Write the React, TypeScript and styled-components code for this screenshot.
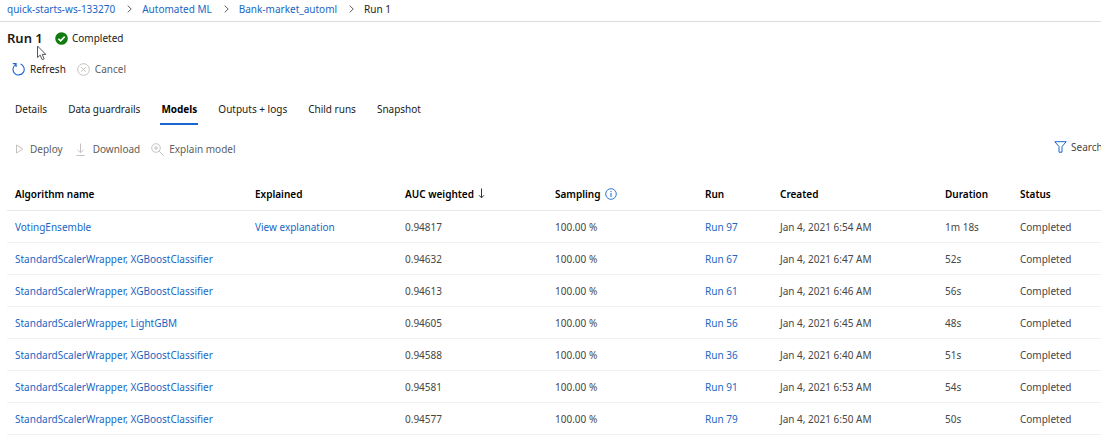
import React from "react";
import styled, { createGlobalStyle, css } from "styled-components";

const GlobalStyle = createGlobalStyle`
  *, *::before, *::after { box-sizing: border-box; }
  body {
    margin: 0;
    background: #ffffff;
    color: #1b1a19;
    font-family: "Noto Sans", "Open Sans", sans-serif;
    font-size: 10px;
    line-height: 16px;
    overflow-x: hidden;
  }
`;

const colors = {
  link: "#1a66c4",
  text: "#1b1a19",
  cell: "#484644",
  muted: "#605e5c",
  faint: "#c4c2c0",
  line: "#f1f1f1",
};

const Breadcrumbs = styled.nav`
  height: 22px;
  border-bottom: 1px solid #dcdcdc;
  padding: 1px 7px 0;

  ol {
    display: flex;
    margin: 0;
    padding: 0;
    list-style: none;
  }
  li {
    display: flex;
    align-items: center;
    white-space: nowrap;
  }
`;

const Link = styled.a`
  color: ${colors.link};
  text-decoration: none;
  &:hover { text-decoration: underline; }
`;

const Chevron = styled.svg`
  width: 5px;
  height: 8px;
  margin: 0 10px 0 12px;
`;

const Header = styled.header`
  position: relative;
  display: flex;
  align-items: center;
  height: 32px;
  padding-left: 7px;
`;

const Title = styled.h1`
  margin: 0;
  width: 48px;
  font-size: 13px;
  font-weight: 600;
  white-space: nowrap;
`;

const Status = styled.span`
  display: flex;
  align-items: center;
  gap: 4px;
`;

const Pointer = styled.svg`
  position: absolute;
  left: 36px;
  top: 23px;
  width: 12px;
  height: 17px;
`;

const Toolbar = styled.div<{ $top: number; $left: number }>`
  display: flex;
  align-items: center;
  margin-top: ${(p) => p.$top}px;
  padding-left: ${(p) => p.$left}px;
  height: 24px;
`;

const Command = styled.button<{ $gap?: number; $after?: number }>`
  display: flex;
  align-items: center;
  gap: ${(p) => p.$gap ?? 5}px;
  margin: 0 ${(p) => p.$after ?? 11}px 0 0;
  padding: 0;
  border: 0;
  background: none;
  color: ${colors.text};
  font: inherit;
  white-space: nowrap;
  &:disabled { color: ${colors.muted}; }
`;

const Tabs = styled.div`
  display: flex;
  gap: 19px;
  margin-top: 12px;
  padding-left: 14px;
`;

const Tab = styled.button<{ $active?: boolean }>`
  height: 32px;
  padding: 2px 1px 0;
  border: 0;
  border-bottom: 2px solid transparent;
  background: none;
  color: ${colors.text};
  font: inherit;
  white-space: nowrap;
  ${(p) => p.$active && css`
    border-bottom-color: #1a66d0;
    color: #000000;
    font-weight: 700;
  `}
`;

const Search = styled.label`
  display: flex;
  align-items: center;
  align-self: flex-start;
  gap: 4px;
  margin-left: auto;
  padding-top: 2px;
`;

const SearchInput = styled.input`
  width: 30px;
  padding: 0;
  border: 0;
  outline: 0;
  background: none;
  font: inherit;
  color: ${colors.cell};
  &::placeholder { color: ${colors.cell}; opacity: 1; }
`;

const Grid = styled.main`
  margin-top: 16px;
  padding-left: 7px;
`;

const Table = styled.table`
  width: 100%;
  table-layout: fixed;
  border-collapse: separate;
  border-spacing: 0;

  th, td {
    height: 32px;
    padding: 0 0 0 8px;
    border-bottom: 1px solid ${colors.line};
    text-align: left;
    white-space: nowrap;
  }
  th {
    height: 34px;
    border-bottom-color: #e6e8ea;
    color: #000000;
    font-weight: 600;
  }
  td { color: ${colors.cell}; }
`;

const HeadLabel = styled.span`
  display: flex;
  align-items: center;
  gap: 4px;
`;

const columnWidths = [240, 150, 150, 150, 75, 165, 75];

const XGB = "StandardScalerWrapper, XGBoostClassifier";
const rows = [
  { name: "VotingEnsemble", explained: true, auc: "0.94817", run: 97, time: "6:54", duration: "1m 18s" },
  { name: XGB, auc: "0.94632", run: 67, time: "6:47", duration: "52s" },
  { name: XGB, auc: "0.94613", run: 61, time: "6:46", duration: "56s" },
  { name: "StandardScalerWrapper, LightGBM", auc: "0.94605", run: 56, time: "6:45", duration: "48s" },
  { name: XGB, auc: "0.94588", run: 36, time: "6:40", duration: "51s" },
  { name: XGB, auc: "0.94581", run: 91, time: "6:53", duration: "54s" },
  { name: XGB, auc: "0.94577", run: 79, time: "6:50", duration: "50s" },
];

const Separator = () => (
  <Chevron viewBox="0 0 5 8" fill="none" stroke="#605e5c" aria-hidden="true">
    <path d="M.7.6 4.2 4 .7 7.4" />
  </Chevron>
);

const CheckIcon = () => (
  <svg width="13" height="13" viewBox="0 0 13 13" aria-hidden="true">
    <circle cx="6.5" cy="6.5" r="6.3" fill="#107c10" />
    <path d="M3.4 6.7 5.6 8.9 9.7 4.6" fill="none" stroke="#fff" strokeWidth="1.6" />
  </svg>
);

const RefreshIcon = () => (
  <svg width="13" height="14" viewBox="0 0 13 14" fill="none" stroke="#1a66d0" strokeWidth="1.1" aria-hidden="true">
    <path d="M8.6 2.1a5.6 5.6 0 1 1-5 .5M.8 1.6h3.3v3.3" />
  </svg>
);

const CancelIcon = () => (
  <svg width="13" height="13" viewBox="0 0 13 13" fill="none" stroke={colors.faint} aria-hidden="true">
    <circle cx="6.5" cy="6.5" r="5.8" />
    <path d="m4.2 4.2 4.6 4.6m0-4.6L4.2 8.8" />
  </svg>
);

const PlayIcon = () => (
  <svg width="9" height="12" viewBox="0 0 9 12" fill="none" stroke={colors.faint} aria-hidden="true">
    <path d="M1.5 2v8L7.8 6z" />
  </svg>
);

const DownloadIcon = () => (
  <svg width="9" height="13" viewBox="0 0 9 13" fill="none" stroke={colors.faint} aria-hidden="true">
    <path d="M4.5.5v9M1.5 6.8l3 3 3-3M.5 12.5h8" />
  </svg>
);

const ExplainIcon = () => (
  <svg width="13" height="13" viewBox="0 0 13 13" fill="none" stroke={colors.faint} aria-hidden="true">
    <circle cx="5" cy="5" r="4.3" />
    <path d="m8.2 8.2 4.2 4.2M5 2.8v4.4M2.8 5h4.4" />
  </svg>
);

const FilterIcon = () => (
  <svg width="13" height="12" viewBox="0 0 13 12" fill="none" stroke="#1a66d0" aria-hidden="true">
    <path d="M.8.7h11.4L8 5.6v5.6H5V5.6z" />
  </svg>
);

const SortIcon = () => (
  <svg width="7" height="11" viewBox="0 0 7 11" fill="none" stroke="#323130" aria-hidden="true">
    <path d="M3.5.5v9.3M1 7.3l2.5 2.5L6 7.3" />
  </svg>
);

const InfoIcon = () => (
  <svg width="12" height="12" viewBox="0 0 12 12" fill="none" stroke="#1a66d0" aria-hidden="true">
    <circle cx="6" cy="6" r="5.3" strokeWidth=".9" />
    <path d="M6 5v4M6 3v1.1" />
  </svg>
);

export default function App() {
  return (
    <>
      <GlobalStyle />
      <Breadcrumbs aria-label="Breadcrumb">
        <ol>
          <li><Link href="#workspace">quick-starts-ws-133270</Link><Separator /></li>
          <li><Link href="#automl">Automated ML</Link><Separator /></li>
          <li><Link href="#experiment">Bank-market_automl</Link><Separator /></li>
          <li aria-current="page">Run 1</li>
        </ol>
      </Breadcrumbs>
      <Header>
        <Title>Run 1</Title>
        <Status><CheckIcon />Completed</Status>
        <Pointer viewBox="0 0 12 17" aria-hidden="true">
          <path d="M1.5 1v11.5l2.7-2.4 2 4.6 2-.9-2-4.4h3.6z" fill="#fff" stroke="#55555f" />
        </Pointer>
      </Header>
      <Toolbar $top={3} $left={12}>
        <Command><RefreshIcon />Refresh</Command>
        <Command disabled><CancelIcon />Cancel</Command>
      </Toolbar>
      <Tabs role="tablist">
        {["Details", "Data guardrails", "Models", "Outputs + logs", "Child runs", "Snapshot"].map((t) => (
          <Tab key={t} role="tab" $active={t === "Models"} aria-selected={t === "Models"}>{t}</Tab>
        ))}
      </Tabs>
      <Toolbar $top={12} $left={15}>
        <Command disabled $gap={6} $after={13}><PlayIcon />Deploy</Command>
        <Command disabled $gap={8}><DownloadIcon />Download</Command>
        <Command disabled><ExplainIcon />Explain model</Command>
        <Search>
          <FilterIcon />
          <SearchInput type="text" placeholder="Search" aria-label="Search" />
        </Search>
      </Toolbar>
      <Grid>
        <Table>
          <colgroup>
            {columnWidths.map((w, i) => <col key={i} width={w} />)}
            <col />
          </colgroup>
          <thead>
            <tr>
              <th>Algorithm name</th>
              <th>Explained</th>
              <th><HeadLabel>AUC weighted<SortIcon /></HeadLabel></th>
              <th><HeadLabel>Sampling<InfoIcon /></HeadLabel></th>
              <th>Run</th>
              <th>Created</th>
              <th>Duration</th>
              <th>Status</th>
            </tr>
          </thead>
          <tbody>
            {rows.map((r) => (
              <tr key={r.run}>
                <td><Link href="#model">{r.name}</Link></td>
                <td>{r.explained && <Link href="#explanation">View explanation</Link>}</td>
                <td>{r.auc}</td>
                <td>100.00 %</td>
                <td><Link href="#run">Run {r.run}</Link></td>
                <td>Jan 4, 2021 {r.time} AM</td>
                <td>{r.duration}</td>
                <td>Completed</td>
              </tr>
            ))}
          </tbody>
        </Table>
      </Grid>
    </>
  );
}
